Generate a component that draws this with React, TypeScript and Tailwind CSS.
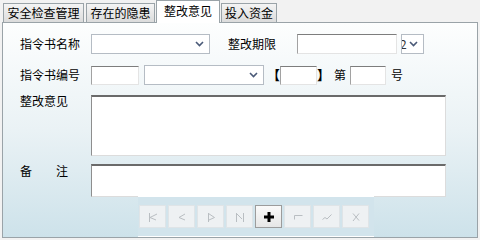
import React from "react";

const Chevron = () => (
  <svg width="9" height="6" viewBox="0 0 9 6" className="shrink-0">
    <polyline points="1,1 4.5,4.5 8,1" fill="none" stroke="#4a5a78" strokeWidth="1.6" />
  </svg>
);

const Select = ({ w, text }: { w: string; text?: string }) => (
  <div className={`${w} h-[20px] bg-white border border-[#b5bcc4] flex items-center justify-between pl-[1px] pr-[5px] overflow-hidden`}>
    <span className="text-[12px] leading-none text-[#333] -ml-[3px]">{text}</span>
    <Chevron />
  </div>
);

const Input = ({ w, h = "h-[20px]" }: { w: string; h?: string }) => (
  <div className={`${w} ${h} bg-white border border-t-[#7d7d7d] border-l-[#a2a2a2] border-r-[#e4e4e4] border-b-[#e4e4e4]`} />
);

const Area = ({ h }: { h: string }) => (
  <div className={`w-[355px] ${h} bg-white border border-t-2 border-t-[#6a6a6a] border-l-[#8e8e8e] border-r-[#dcdcdc] border-b-[#dcdcdc]`} />
);

const Ico = ({ children }: { children: React.ReactNode }) => (
  <svg width="12" height="12" viewBox="0 0 12 12" fill="none" stroke="#b9bec2" strokeWidth="1">
    {children}
  </svg>
);

const tools = [
  <Ico key="first"><path d="M2.5 2v9M10 3L3 6.5 9 9" /></Ico>,
  <Ico key="prev"><path d="M9 3L3 6.5 9 9" /></Ico>,
  <Ico key="next"><path d="M3.5 2v9M3.5 2.5L9.5 6.5 4 9" /></Ico>,
  <Ico key="last"><path d="M2.5 2v9M2.5 2.5L8 8M9.5 2v9" /></Ico>,
  <svg key="add" width="10" height="10" viewBox="0 0 10 10">
    <path d="M3.5 0h3v3.5H10v3H6.5V10h-3V6.5H0v-3h3.5z" fill="#000" />
  </svg>,
  <Ico key="edit"><path d="M2.5 4.5v4M2.5 4.5h8" /></Ico>,
  <Ico key="ok"><path d="M1.5 8.5L4 6.5 6 8 10.5 3.5" /></Ico>,
  <Ico key="cancel"><path d="M3 2.5l6 7M9 2.5L3 10" /></Ico>,
];

export default function App() {
  return (
    <div className="w-[480px] h-[240px] bg-[#f2f2f2] font-['Noto_Sans_CJK_SC','Noto_Sans',sans-serif] text-[12px] text-black overflow-hidden">
      {/* tabs */}
      <div className="flex items-end h-[22px] pl-[3px] relative z-10">
        <div className="w-[81px] h-[19px] mr-[2px] border border-[#9aa3a8] border-b-0 bg-gradient-to-b from-[#f4f4f4] to-[#dcdcdc] flex items-center justify-center leading-none">安全检查管理</div>
        <div className="w-[69px] h-[19px] mr-[1px] border border-[#9aa3a8] border-b-0 bg-gradient-to-b from-[#f4f4f4] to-[#dcdcdc] flex items-center justify-center leading-none">存在的隐患</div>
        <div className="w-[64px] h-[23px] mb-[-1px] border border-[#9aa3a8] border-b-0 bg-white flex items-center justify-center leading-none pb-[2px]">整改意见</div>
        <div className="w-[56px] h-[19px] ml-[1px] border border-[#9aa3a8] border-b-0 bg-gradient-to-b from-[#f4f4f4] to-[#dcdcdc] flex items-center justify-center leading-none">投入资金</div>
      </div>

      {/* panel */}
      <div className="mx-[2px] h-[216px] border border-[#9aa3a8] bg-gradient-to-b from-[#fdfefe] via-[#eaf2f5] to-[#cde2ea] pl-[17px] pt-[11px] flex flex-col">
        <div className="flex items-center">
          <span className="w-[71px]">指令书名称</span>
          <Select w="w-[119px]" />
          <span className="ml-[18px] w-[69px]">整改期限</span>
          <Input w="w-[100px]" />
          <div className="ml-[4px]">
            <Select w="w-[23px]" text="2" />
          </div>
        </div>

        <div className="flex items-center mt-[11px]">
          <span className="w-[71px]">指令书编号</span>
          <Input w="w-[48px]" h="h-[19px]" />
          <div className="ml-[5px]">
            <Select w="w-[120px]" />
          </div>
          <span className="ml-[3px] font-bold text-[13px]">【</span>
          <Input w="w-[37px]" h="h-[19px]" />
          <span className="font-bold text-[13px] mr-[4px]">】</span>
          <span>第</span>
          <div className="ml-[4px]">
            <Input w="w-[36px]" h="h-[19px]" />
          </div>
          <span className="ml-[5px]">号</span>
        </div>

        <div className="flex items-start mt-[10px]">
          <span className="w-[71px] leading-[12px]">整改意见</span>
          <Area h="h-[61px]" />
        </div>

        <div className="flex items-start mt-[8px]">
          <span className="w-[71px] flex leading-[12px] pt-[1px]">
            <span>备</span>
            <span className="ml-[24px]">注</span>
          </span>
          <Area h="h-[33px]" />
        </div>

        <div className="ml-[118px] mt-[-1px] w-[236px] h-[42px] border-t border-b border-white bg-[#d2e4ec] flex items-start gap-[2px] pl-[1px] pt-[8px]">
          {tools.map((t, i) => (
            <div
              key={i}
              className={
                i === 4
                  ? "w-[27px] h-[23px] border border-[#9c9c9c] bg-gradient-to-b from-[#fafafa] to-[#e6e6e6] flex items-center justify-center"
                  : "w-[27px] h-[23px] border border-[#dfe4e7] bg-[#eef1f3] flex items-center justify-center"
              }
            >
              {t}
            </div>
          ))}
        </div>
      </div>
    </div>
  );
}
